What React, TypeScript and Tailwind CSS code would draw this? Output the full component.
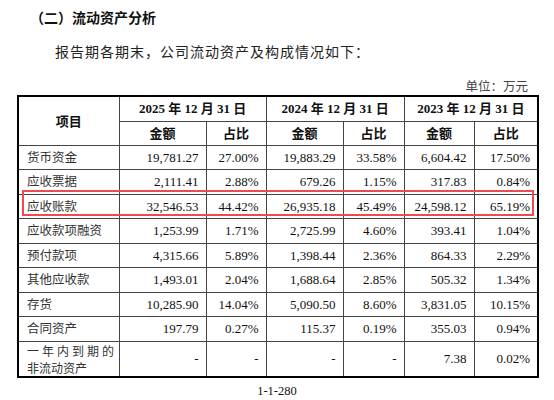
const rows: [string, string, string, string, string, string, string][] = [
  ["货币资金", "19,781.27", "27.00%", "19,883.29", "33.58%", "6,604.42", "17.50%"],
  ["应收票据", "2,111.41", "2.88%", "679.26", "1.15%", "317.83", "0.84%"],
  ["应收账款", "32,546.53", "44.42%", "26,935.18", "45.49%", "24,598.12", "65.19%"],
  ["应收款项融资", "1,253.99", "1.71%", "2,725.99", "4.60%", "393.41", "1.04%"],
  ["预付款项", "4,315.66", "5.89%", "1,398.44", "2.36%", "864.33", "2.29%"],
  ["其他应收款", "1,493.01", "2.04%", "1,688.64", "2.85%", "505.32", "1.34%"],
  ["存货", "10,285.90", "14.04%", "5,090.50", "8.60%", "3,831.05", "10.15%"],
  ["合同资产", "197.79", "0.27%", "115.37", "0.19%", "355.03", "0.94%"],
];

const years = ["2025", "2024", "2023"];

export default function App() {
  return (
    <div className="w-[554px] h-[400px] bg-white text-[#111] font-['Liberation_Serif','Noto_Sans_CJK_SC',serif] overflow-hidden">
      <h2 className="pl-[30px] mt-[7px] h-[20px] leading-[20px] text-[14px] font-bold font-['Noto_Sans_CJK_SC',sans-serif]">
        （二）流动资产分析
      </h2>
      <p className="pl-[55px] mt-[16px] h-[20px] leading-[20px] text-[14px] tracking-[1px] text-[#222]">
        报告期各期末，公司流动资产及构成情况如下：
      </p>
      <div className="mt-[16px] h-[16px] leading-[16px] pr-[26px] text-right text-[12.5px] text-[#444]">
        单位：万元
      </div>

      <div className="relative ml-[17px] w-[520px]">
        <table className="w-[520px] table-fixed border-collapse border-2 border-black text-[13px]">
          <colgroup>
            <col className="w-[101px]" />
            <col className="w-[87px]" />
            <col className="w-[60px]" />
            <col className="w-[77px]" />
            <col className="w-[61px]" />
            <col className="w-[70px]" />
            <col className="w-[64px]" />
          </colgroup>
          <thead className="font-bold">
            <tr className="h-[25px]">
              <th rowSpan={2} className="border border-[#444] font-['Noto_Sans_CJK_SC',sans-serif] font-bold">
                项目
              </th>
              {years.map((y) => (
                <th key={y} colSpan={2} className="border border-[#444] font-bold whitespace-nowrap">
                  {y} 年 12 月 31 日
                </th>
              ))}
            </tr>
            <tr className="h-[24px]">
              {years.map((y) => (
                <>
                  <th key={y + "a"} className="border border-[#444] font-['Noto_Sans_CJK_SC',sans-serif] font-bold">
                    金额
                  </th>
                  <th key={y + "b"} className="border border-[#444] font-['Noto_Sans_CJK_SC',sans-serif] font-bold">
                    占比
                  </th>
                </>
              ))}
            </tr>
          </thead>
          <tbody>
            {rows.map((r) => (
              <tr key={r[0]} className="h-[24.5px]">
                <td className="border border-[#444] pl-[8px] text-left font-['Noto_Sans_CJK_SC',sans-serif] text-[12.5px] text-[#333] whitespace-nowrap">
                  {r[0]}
                </td>
                {r.slice(1).map((v, i) => (
                  <td key={i} className="border border-[#444] pr-[7px] text-right">
                    {v}
                  </td>
                ))}
              </tr>
            ))}
            <tr className="h-[35px]">
              <td className="border border-[#444] pl-[8px] font-['Noto_Sans_CJK_SC',sans-serif] text-[12px] text-[#333] leading-[17px] whitespace-nowrap">
                <div className="tracking-[3px]">一年内到期的</div>
                <div>非流动资产</div>
              </td>
              <td className="border border-[#444] pr-[7px] text-right">-</td>
              <td className="border border-[#444] pr-[7px] text-right">-</td>
              <td className="border border-[#444] pr-[7px] text-right">-</td>
              <td className="border border-[#444] pr-[7px] text-right">-</td>
              <td className="border border-[#444] pr-[7px] text-right">7.38</td>
              <td className="border border-[#444] pr-[7px] text-right">0.02%</td>
            </tr>
          </tbody>
        </table>
        <div className="absolute left-[5px] top-[95px] w-[512px] h-[26px] border-2 border-[#ee4a4f]" />
      </div>

      <div className="mt-[5px] h-[16px] leading-[16px] text-center text-[12.5px]">1-1-280</div>
    </div>
  );
}
